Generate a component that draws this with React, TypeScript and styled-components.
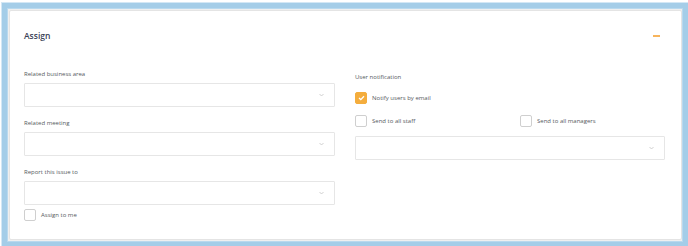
import * as React from 'react'
import styled, { createGlobalStyle } from 'styled-components'

const GlobalStyle = createGlobalStyle`
  html, body {
    margin: 0;
    padding: 0;
    background: #ffffff;
  }
  body {
    font-family: 'Open Sans', 'Liberation Sans', sans-serif;
  }
`

const Frame = styled.div`
  width: 688px;
  height: 246px;
  box-sizing: border-box;
  padding: 3px 0 0 2px;
  background: #ffffff;
`
const Bezel = styled.div`
  height: 100%;
  box-sizing: border-box;
  border-style: solid;
  border-color: #a4cde8;
  border-width: 5px 5px 4px 5px;
  box-shadow: inset 0 0 0 1px #b9d9ee, 0 0 0 1px #d3e7f5;
  background: #efefef;
  padding: 2px 1px 2px 2px;
`
const Card = styled.div`
  height: 100%;
  box-sizing: border-box;
  background: #ffffff;
  border: 1px solid #e4e4e4;
  border-radius: 2px;
  padding: 0 19px 0 14px;
`
const Header = styled.div`
  height: 49px;
  display: flex;
  align-items: center;
  justify-content: space-between;
`
const Title = styled.h2`
  margin: 0;
  font-size: 8.5px;
  font-weight: 600;
  color: #3b4357;
`
const Collapse = styled.span`
  display: block;
  width: 7px;
  height: 2px;
  background: #f7b45c;
  margin-right: 2px;
`
const Body = styled.div`
  display: grid;
  grid-template-columns: 311px 310px;
  column-gap: 20px;
  padding-top: 9px;
`
const Column = styled.div<{ $offset?: number }>`
  display: flex;
  flex-direction: column;
  padding-top: ${p => p.$offset ?? 0}px;
`
const Field = styled.div<{ $gap?: number }>`
  display: flex;
  flex-direction: column;
  gap: 4px;
  margin-bottom: ${p => p.$gap ?? 11}px;
`
const Label = styled.div`
  font-size: 6px;
  line-height: 10px;
  color: #555a60;
`
const SelectBox = styled.div`
  height: 24px;
  box-sizing: border-box;
  border: 1px solid #e6e6e6;
  border-radius: 1px;
  display: flex;
  align-items: center;
  justify-content: flex-end;
  padding-right: 10px;
`
const Chevron = styled.svg`
  width: 5px;
  height: 4px;
`
const Row = styled.div<{ $top?: number; $gap?: number }>`
  display: grid;
  grid-template-columns: 165px 1fr;
  margin-top: ${p => p.$top ?? 0}px;
  margin-bottom: ${p => p.$gap ?? 0}px;
`
const CheckLine = styled.label`
  display: flex;
  align-items: center;
  gap: 5px;
  font-size: 6px;
  color: #555a60;
  line-height: 12px;
`
const Box = styled.span<{ $checked?: boolean }>`
  width: 12px;
  height: 12px;
  box-sizing: border-box;
  border-radius: 2px;
  border: 1px solid ${p => (p.$checked ? '#f4ad3d' : '#cfcfcf')};
  background: ${p => (p.$checked ? '#f4ad3d' : '#ffffff')};
  display: flex;
  align-items: center;
  justify-content: center;
`

const Select: React.FC = () => (
  <SelectBox>
    <Chevron viewBox="0 0 5 4">
      <path d="M0.5 1 L2.5 3 L4.5 1" fill="none" stroke="#c4c4c4" strokeWidth="0.8" />
    </Chevron>
  </SelectBox>
)

const Check: React.FC<{ checked?: boolean; children: React.ReactNode }> = ({ checked, children }) => (
  <CheckLine>
    <Box $checked={checked}>
      {checked && (
        <svg width="7" height="6" viewBox="0 0 7 6">
          <path d="M1 3 L2.8 4.6 L6 1.2" fill="none" stroke="#fff" strokeWidth="1.3" />
        </svg>
      )}
    </Box>
    {children}
  </CheckLine>
)

export default function App() {
  return (
    <>
      <GlobalStyle />
      <Frame>
        <Bezel>
          <Card>
            <Header>
              <Title>Assign</Title>
              <Collapse />
            </Header>
            <Body>
              <Column>
                <Field>
                  <Label>Related business area</Label>
                  <Select />
                </Field>
                <Field>
                  <Label>Related meeting</Label>
                  <Select />
                </Field>
                <Field $gap={4}>
                  <Label>Report this issue to</Label>
                  <Select />
                </Field>
                <Check>Assign to me</Check>
              </Column>
              <Column $offset={3}>
                <Label>User notification</Label>
                <Row $top={10} $gap={11}>
                  <Check checked>Notify users by email</Check>
                </Row>
                <Row $gap={9}>
                  <Check>Send to all staff</Check>
                  <Check>Send to all managers</Check>
                </Row>
                <Select />
              </Column>
            </Body>
          </Card>
        </Bezel>
      </Frame>
    </>
  )
}
